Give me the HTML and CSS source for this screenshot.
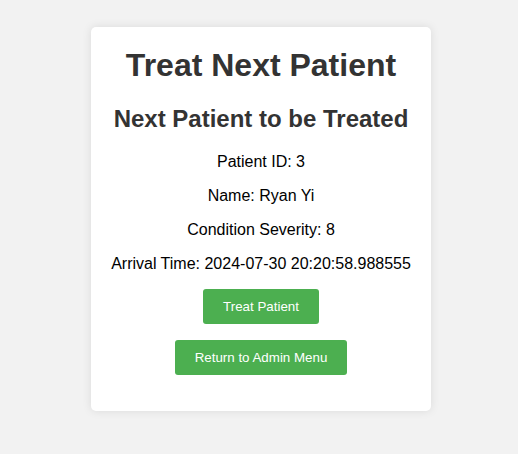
FILE: index.html
```html
<!DOCTYPE html>
<html lang="en">
<head>
<meta charset="utf-8">
<title>Treat Next Patient</title>
<link rel="stylesheet" href="styles.css">
</head>
<body>
<div class="card">
  <h1>Treat Next Patient</h1>
  <h2>Next Patient to be Treated</h2>
  <p>Patient ID: 3</p>
  <p>Name: Ryan Yi</p>
  <p>Condition Severity: 8</p>
  <p>Arrival Time: 2024-07-30 20:20:58.988555</p>
  <form class="action"><button type="button" class="btn">Treat Patient</button></form>
  <div class="action"><button type="button" class="btn">Return to Admin Menu</button></div>
</div>
</body>
</html>
```
FILE: styles.css
```css
html, body {
  margin: 0;
  padding: 0;
}
body {
  background: #f2f2f2;
  font-family: "Liberation Sans", Arial, sans-serif;
  display: flex;
  justify-content: center;
  align-items: flex-start;
  padding: 27px 0 0 4px;
  min-height: 454px;
  box-sizing: border-box;
}
.card {
  width: 300px;
  padding: 20px;
  background: #fff;
  border-radius: 5px;
  box-shadow: 0 0 10px rgba(0, 0, 0, 0.1);
  text-align: center;
  color: #000;
}
h1 {
  color: #333;
  font-size: 32px;
  margin: 0 0 21.44px;
}
h2 {
  color: #333;
  font-size: 24px;
  margin: 0 0 19.92px;
}
p {
  font-size: 16px;
  margin: 0 0 16px;
}
.action {
  margin: 0 0 16px;
}
.btn {
  background: #4caf50;
  color: #fff;
  border: none;
  border-radius: 3px;
  padding: 10px 20px;
  font-family: "Liberation Sans", Arial, sans-serif;
  font-size: 13.333px;
  cursor: pointer;
}
```
